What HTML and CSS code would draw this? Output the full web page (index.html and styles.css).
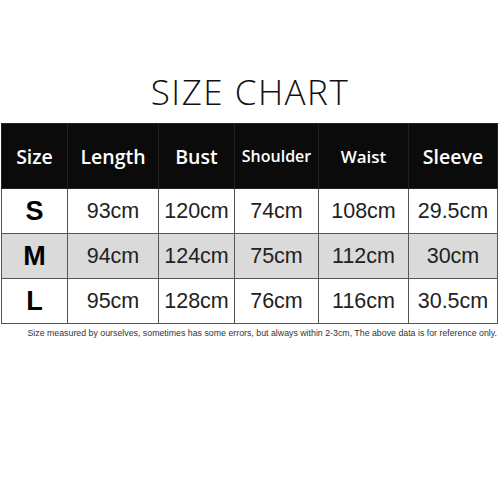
FILE: index.html
```html
<!DOCTYPE html>
<html>
<head>
<meta charset="utf-8">
<link rel="stylesheet" href="styles.css">
</head>
<body>
<div class="page">
  <h1 class="title">SIZE CHART</h1>
  <table class="chart">
    <colgroup>
      <col class="c1"><col class="c2"><col class="c3"><col class="c4"><col class="c5"><col class="c6">
    </colgroup>
    <thead>
      <tr><th>Size</th><th>Length</th><th>Bust</th><th class="sm">Shoulder</th><th class="md">Waist</th><th>Sleeve</th></tr>
    </thead>
    <tbody>
      <tr><td class="sz">S</td><td>93cm</td><td>120cm</td><td>74cm</td><td>108cm</td><td>29.5cm</td></tr>
      <tr class="alt"><td class="sz">M</td><td>94cm</td><td>124cm</td><td>75cm</td><td>112cm</td><td>30cm</td></tr>
      <tr><td class="sz">L</td><td>95cm</td><td>128cm</td><td>76cm</td><td>116cm</td><td>30.5cm</td></tr>
    </tbody>
  </table>
  <p class="note">Size measured by ourselves, sometimes has some errors, but always within 2-3cm, The above data is for reference only.</p>
</div>
</body>
</html>
```
FILE: styles.css
```css
html, body { margin: 0; padding: 0; background: #fff; }
.page { width: 500px; height: 500px; padding-top: 72px; box-sizing: border-box; }
.title {
  margin: 0 0 12px 0;
  text-align: center;
  font-family: "Open Sans", sans-serif;
  font-weight: 300;
  font-size: 35px;
  line-height: 39px;
  letter-spacing: 1.5px;
  color: #111;
}
.chart {
  margin-left: 1px;
  border-collapse: collapse;
  table-layout: fixed;
  width: 496px;
}
.c1 { width: 66px; } .c2 { width: 91px; } .c3 { width: 76px; }
.c4 { width: 84px; } .c5 { width: 90px; } .c6 { width: 89px; }
.chart th {
  background: #0b0b0b;
  color: #fff;
  height: 64px;
  padding: 0;
  font-family: "Open Sans", sans-serif;
  font-weight: 600;
  font-size: 19.5px;
  border: 1px solid #222;
}
.chart th.sm { font-size: 16px; }
.chart th.md { font-size: 17px; }
.chart td {
  height: 44px;
  padding: 0;
  text-align: center;
  font-family: "Liberation Sans", Arial, sans-serif;
  font-size: 21.5px;
  color: #222;
  border: 1px solid #555;
}
.chart td.sz { font-weight: 700; font-size: 27px; color: #000; }
.chart tr.alt td { background: #dadada; }
.note {
  margin: 4px 0 0 0;
  padding-right: 3px;
  text-align: right;
  font-family: "Liberation Sans", Arial, sans-serif;
  font-size: 8.8px;
  color: #333;
}
```
